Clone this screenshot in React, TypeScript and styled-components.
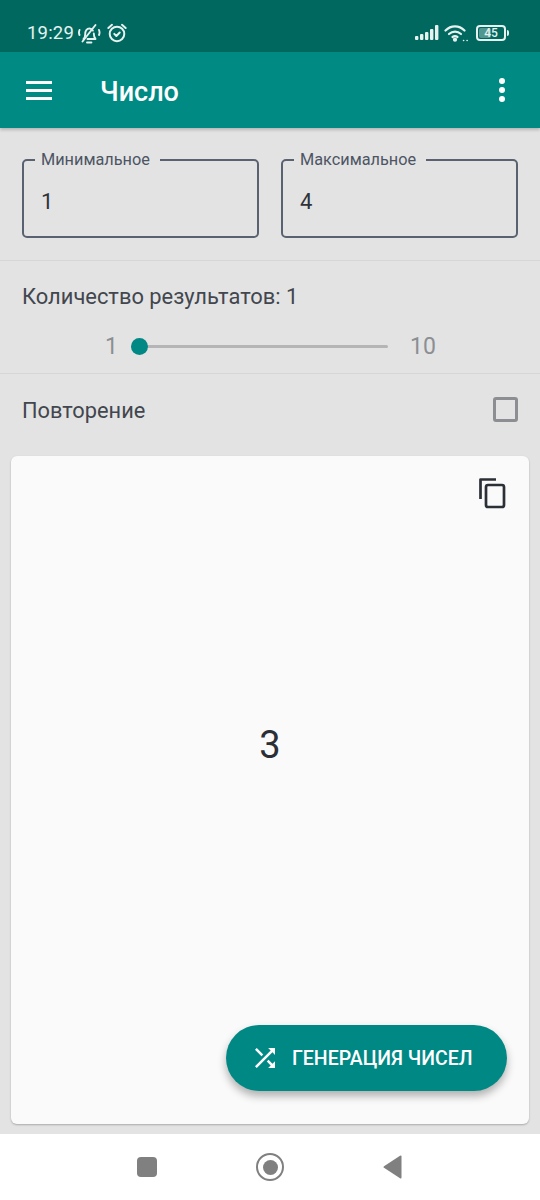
import React from "react";
import styled, { createGlobalStyle } from "styled-components";

const GlobalStyle = createGlobalStyle`
	html, body {
		margin: 0;
		padding: 0;
		background: #e3e3e3;
	}
	* {
		box-sizing: border-box;
	}
`;

const App: React.FC = () => {
	return (
		<Screen>
			<GlobalStyle />
			<StatusBar>
				<StatusLeft>
					<Clock>19:29</Clock>
					<svg width="24" height="24" viewBox="0 0 24 24" fill="none" stroke="#e6f2f0" strokeWidth="1.9" strokeLinecap="round" strokeLinejoin="round">
						<path d="M6.500 18c1.300-1.200 1.700-2.300 1.700-4.800 0-3.200 1.600-5.700 4.300-5.700 1.500 0 2.700.8 3.400 2.100" />
						<path d="M16.800 12.500c0 2.700.5 4.200 1.700 5.500h-8" />
						<path d="M10 21.500h4.400" />
						<path d="M5.500 20.500l13-16.500" />
						<path d="M2.500 9c-.7 1.700-.7 3.500 0 5M22 9c.7 1.700.7 3.500 0 5" />
					</svg>
					<svg width="20" height="22" viewBox="0 0 22 24" fill="none" stroke="#e6f2f0" strokeWidth="2.200" strokeLinecap="round" strokeLinejoin="round">
						<circle cx="11" cy="13" r="8" />
						<path d="M8 13l2.300 2.300L14 11.500" />
						<path d="M1.500 6.500L5.500 3M20.500 6.500L16.500 3" />
					</svg>
				</StatusLeft>
				<StatusRight>
					<svg width="24" height="16" viewBox="0 0 24 16" fill="#e6f2f0">
						<rect x="0" y="11" width="3.400" height="4" rx="1" />
						<rect x="5" y="9" width="3.400" height="6" rx="1" />
						<rect x="10" y="7" width="3.400" height="8" rx="1" />
						<rect x="15" y="4" width="3.400" height="11" rx="1" />
						<rect x="20" y="0" width="3.400" height="15" rx="1" />
					</svg>
					<svg width="24" height="18" viewBox="0 0 24 18" fill="none" stroke="#e6f2f0" strokeWidth="2.200" strokeLinecap="round">
						<path d="M1.500 6.500C7 1 15 1 20.500 6.500" />
						<path d="M5 10c3.500-3.200 8.500-3.200 12 0" />
						<path d="M8.500 13c1.800-1.100 3.200-1.100 5 0" />
						<circle cx="11" cy="15.700" r="1" fill="#e6f2f0" />
						<path d="M19.500 16.500h.2M23 16.500h.2" strokeWidth="1.500" />
					</svg>
					<Battery>
						<BatteryBody>
							<BatteryFill />
							<BatteryLabel>45</BatteryLabel>
						</BatteryBody>
						<BatteryCap />
					</Battery>
				</StatusRight>
			</StatusBar>
			<Toolbar>
				<MenuIcon>
					<span />
					<span />
					<span />
				</MenuIcon>
				<Title>Число</Title>
				<MoreIcon>
					<span />
					<span />
					<span />
				</MoreIcon>
			</Toolbar>
			<Main>
				<FieldsRow>
					<Field>
						<FieldLabel>Минимальное</FieldLabel>
						<FieldValue>1</FieldValue>
					</Field>
					<Field>
						<FieldLabel>Максимальное</FieldLabel>
						<FieldValue>4</FieldValue>
					</Field>
				</FieldsRow>
				<ResultsSection>
					<ResultsLabel>Количество результатов: 1</ResultsLabel>
					<SliderRow>
						<SliderEnd>1</SliderEnd>
						<Track>
							<Thumb />
						</Track>
						<SliderEnd>10</SliderEnd>
					</SliderRow>
				</ResultsSection>
				<RepeatRow>
					<RepeatLabel>Повторение</RepeatLabel>
					<CheckBox />
				</RepeatRow>
				<Card>
					<CopyButton>
						<svg width="30" height="32" viewBox="0 0 30 32" fill="none" stroke="#2b2f36" strokeWidth="2.700" strokeLinejoin="round">
							<path d="M2.500 22V2.500H18" />
							<rect x="8" y="8" width="18" height="22" rx="2" />
						</svg>
					</CopyButton>
					<Result>3</Result>
					<Fab>
						<svg width="30" height="30" viewBox="0 0 24 24" fill="#fff">
							<path d="M10.590 9.170L5.410 4 4 5.410l5.170 5.170 1.420-1.410zM14.500 4l2.040 2.040L4 18.590 5.410 20 17.960 7.460 20 9.500V4h-5.500zm.33 9.410l-1.410 1.410 3.130 3.130L14.500 20H20v-5.500l-2.040 2.040-3.130-3.130z" />
						</svg>
						<FabLabel>ГЕНЕРАЦИЯ ЧИСЕЛ</FabLabel>
					</Fab>
				</Card>
			</Main>
			<NavBar>
				<NavSquare />
				<NavCircle>
					<span />
				</NavCircle>
				<svg width="20" height="24" viewBox="0 0 20 24" fill="#808080">
					<path d="M18.500 1.500v21a1 1 0 0 1-1.500.800L1 12.800a1 1 0 0 1 0-1.600L17 .7a1 1 0 0 1 1.500.8z" />
				</svg>
			</NavBar>
		</Screen>
	);
};

export default App;

const Screen = styled.div`
	width: 540px;
	height: 1200px;
	display: flex;
	flex-direction: column;
	overflow: hidden;
	background: #e3e3e3;
	font-family: "Roboto", "Liberation Sans", sans-serif;
`;

const StatusBar = styled.div`
	height: 52px;
	flex: none;
	display: flex;
	align-items: center;
	justify-content: space-between;
	padding: 14px 30px 0 27px;
	background: #00685f;
	color: #e6f2f0;
`;

const StatusLeft = styled.div`
	display: flex;
	align-items: center;
	gap: 3px;
	> svg:last-child {
		margin-left: 3px;
	}
`;

const Clock = styled.span`
	font-size: 18.5px;
	letter-spacing: 0.2px;
`;

const StatusRight = styled.div`
	display: flex;
	align-items: center;
	gap: 6px;
	padding-right: 1px;
	> svg:first-child {
		margin-right: -1px;
	}
`;

const Battery = styled.div`
	display: flex;
	align-items: center;
	gap: 1px;
	margin-left: 2px;
`;

const BatteryBody = styled.div`
	position: relative;
	width: 30px;
	height: 16px;
	border: 2px solid #e6f2f0;
	border-radius: 4px;
	display: flex;
	align-items: center;
	justify-content: center;
`;

const BatteryFill = styled.div`
	position: absolute;
	left: 1px;
	top: 1px;
	bottom: 1px;
	width: 12px;
	border-radius: 2px;
	background: rgba(230, 242, 240, 0.35);
`;

const BatteryLabel = styled.span`
	position: relative;
	font-size: 12px;
	font-weight: 500;
	line-height: 12px;
`;

const BatteryCap = styled.div`
	width: 2px;
	height: 6px;
	border-radius: 0 2px 2px 0;
	background: #e6f2f0;
`;

const Toolbar = styled.div`
	height: 76px;
	flex: none;
	display: flex;
	align-items: center;
	padding: 0 35px 0 26px;
	background: #008a84;
	box-shadow: 0 2px 3px rgba(0, 0, 0, 0.2);
	position: relative;
`;

const MenuIcon = styled.div`
	width: 26px;
	display: flex;
	flex-direction: column;
	gap: 5px;
	> span {
		height: 3px;
		background: #fff;
	}
`;

const Title = styled.div`
	margin-left: 48px;
	padding-top: 3px;
	flex: 1;
	font-size: 27px;
	font-weight: 500;
	color: #fff;
`;

const MoreIcon = styled.div`
	display: flex;
	flex-direction: column;
	gap: 3px;
	> span {
		width: 6px;
		height: 6px;
		border-radius: 50%;
		background: #fff;
	}
`;

const Main = styled.div`
	flex: 1;
	min-height: 0;
	display: flex;
	flex-direction: column;
`;

const FieldsRow = styled.div`
	height: 133px;
	flex: none;
	display: grid;
	grid-template-columns: 1fr 1fr;
	gap: 22px;
	padding: 31px 22px 0;
	border-bottom: 1px solid #d6d6d6;
`;

const Field = styled.div`
	position: relative;
	height: 79px;
	padding: 28px 17px 0;
	border: 2px solid #5a6272;
	border-radius: 5px;
`;

const FieldLabel = styled.span`
	position: absolute;
	left: 11px;
	top: -10px;
	padding: 0 10px 0 6px;
	font-size: 16.3px;
	line-height: 18px;
	color: #4d5564;
	background: #e3e3e3;
`;

const FieldValue = styled.div`
	font-size: 22px;
	line-height: 26px;
	color: #30333a;
`;

const ResultsSection = styled.div`
	height: 113px;
	flex: none;
	padding: 22px 22px 0;
	border-bottom: 1px solid #d6d6d6;
`;

const ResultsLabel = styled.div`
	font-size: 21.9px;
	line-height: 28px;
	color: #42464e;
`;

const SliderRow = styled.div`
	display: flex;
	align-items: center;
	margin-top: 20px;
	padding-left: 83px;
`;

const SliderEnd = styled.span`
	width: 27px;
	padding-top: 1px;
	font-size: 23px;
	line-height: 30px;
	color: #8b8f94;
	&:last-child {
		width: auto;
		margin-left: 22px;
	}
`;

const Track = styled.div`
	position: relative;
	width: 257px;
	height: 3px;
	margin-left: -1px;
	background: #b5b5b5;
	border-radius: 2px;
`;

const Thumb = styled.div`
	position: absolute;
	left: 0;
	top: -7px;
	width: 17px;
	height: 17px;
	border-radius: 50%;
	background: #008885;
`;

const RepeatRow = styled.div`
	height: 82px;
	flex: none;
	display: flex;
	align-items: flex-start;
	justify-content: space-between;
	padding: 23px 22px 0;
`;

const RepeatLabel = styled.div`
	font-size: 21.8px;
	line-height: 28px;
	color: #42464e;
`;

const CheckBox = styled.div`
	width: 25px;
	height: 25px;
	border: 3px solid #8c8e92;
	border-radius: 3px;
`;

const Card = styled.div`
	position: relative;
	flex: none;
	height: 668px;
	margin: 0 11px;
	display: flex;
	align-items: center;
	justify-content: center;
	background: #fafafa;
	border-radius: 6px;
	box-shadow: 0 1px 2px rgba(0, 0, 0, 0.25);
`;

const CopyButton = styled.div`
	position: absolute;
	top: 21px;
	right: 21px;
	display: flex;
`;

const Result = styled.div`
	font-size: 38px;
	line-height: 44px;
	margin-bottom: 91px;
	color: #2b2f36;
`;

const Fab = styled.div`
	position: absolute;
	right: 22px;
	bottom: 33px;
	width: 281px;
	height: 66px;
	display: flex;
	align-items: center;
	padding-left: 24px;
	border-radius: 33px;
	background: #008885;
	box-shadow: 0 5px 9px rgba(0, 0, 0, 0.3);
`;

const FabLabel = styled.span`
	margin-left: 12px;
	padding-top: 1px;
	font-size: 19.5px;
	font-weight: 500;
	color: #fff;
`;

const NavBar = styled.div`
	height: 66px;
	flex: none;
	display: flex;
	align-items: center;
	justify-content: space-between;
	padding: 0 137px 0 137px;
	background: #fff;
`;

const NavSquare = styled.div`
	width: 20px;
	height: 20px;
	border-radius: 4px;
	background: #808080;
`;

const NavCircle = styled.div`
	width: 28px;
	height: 28px;
	display: flex;
	align-items: center;
	justify-content: center;
	border: 2.5px solid #808080;
	border-radius: 50%;
	> span {
		width: 15px;
		height: 15px;
		border-radius: 50%;
		background: #808080;
	}
`;
